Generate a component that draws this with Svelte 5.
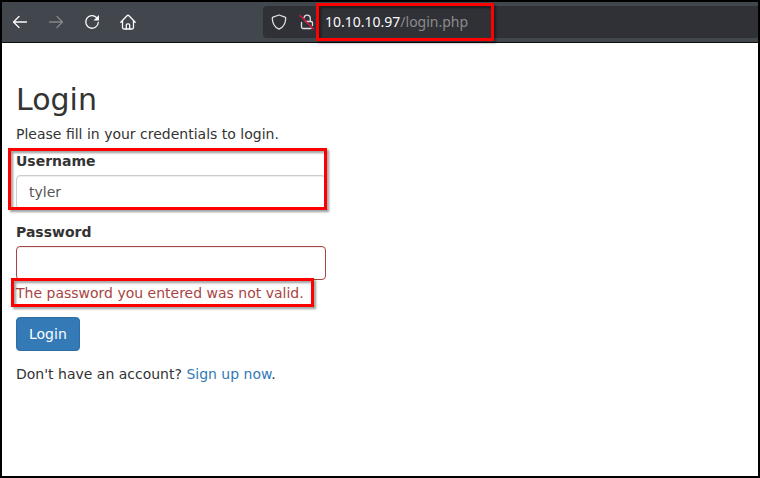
<script>
  let address = { host: '10.10.10.97', path: '/login.php' }
  let username = 'tyler'
  let password = ''
  let passwordError = 'The password you entered was not valid.'
</script>

<div class="window">
  <header class="toolbar">
    <button class="nav" aria-label="Back">
      <svg viewBox="0 0 16 16"><path d="M14.5 8H2M7 2.5 1.5 8 7 13.5" /></svg>
    </button>
    <button class="nav" aria-label="Forward" disabled>
      <svg viewBox="0 0 16 16"><path d="M1.5 8H14M9 2.5 14.5 8 9 13.5" /></svg>
    </button>
    <button class="nav" aria-label="Reload">
      <svg viewBox="0 0 16 16">
        <path d="M12.5 3.5A6.3 6.3 0 1 0 14.3 8.5" />
        <path class="solid" d="M15 1v5.5H9.5z" />
      </svg>
    </button>
    <button class="nav" aria-label="Home">
      <svg viewBox="0 0 16 16">
        <path d="M.8 8.2 7 1.7q1-1 2 0l6.2 6.5M2.5 7v6.5q0 1.500 1.500 1.500h8q1.500 0 1.500-1.500V7" />
        <path d="M6.300 15v-4q0-1.200 1.200-1.200h1q1.200 0 1.200 1.200v4" />
      </svg>
    </button>

    <div class="address">
      <svg viewBox="0 0 16 16">
        <path d="M8 1 14 3.2q.8.3.7 1.2Q14.5 12 8 15.2 1.5 12 1.3 4.400q-.1-.9.7-1.2z" />
      </svg>
      <svg viewBox="0 0 16 16">
        <path d="M5 3.800Q5.600 1.200 8 1.200q3.300 0 3.300 3.300V7M6.500 7.500H12q1.500 0 1.500 1.500v2.500M2.500 8.500v4.500q0 1.500 1.500 1.500h8" />
        <path class="strike" d="M1 1.500 14.500 15" />
      </svg>
      <div class="url marked">{address.host}<span>{address.path}</span></div>
    </div>
  </header>

  <main>
    <h1>Login</h1>
    <p>Please fill in your credentials to login.</p>
    <form on:submit|preventDefault>
      <div class="group marked">
        <label for="username">Username</label>
        <input id="username" type="text" bind:value={username}>
      </div>
      <div class="group has-error">
        <label for="password">Password</label>
        <input id="password" type="password" aria-describedby="password-error" bind:value={password}>
        <div class="help marked" id="password-error">{passwordError}</div>
      </div>
      <button class="submit" type="submit">Login</button>
      <p>Don't have an account? <a href="#register">Sign up now</a>.</p>
    </form>
  </main>
</div>

<style>
  :global(body) {
    margin: 0;
    background: #fff;
  }

  .window {
    box-sizing: border-box;
    min-height: 100vh;
    border: 2px solid #000;
    background: #fff;
    color: #333;
    font: 14px/20px "DejaVu Sans", sans-serif;
  }

  .toolbar {
    display: flex;
    align-items: center;
    height: 40px;
    border-bottom: 1px solid #0c0c0d;
    background: #42464d;
  }

  .nav {
    display: flex;
    justify-content: center;
    flex: none;
    width: 36px;
    padding: 0;
    border: 0;
    background: none;
    color: #fbfbfe;
  }

  .nav:disabled {
    color: #85878b;
  }

  svg {
    flex: none;
    width: 16px;
    height: 16px;
    fill: none;
    stroke: currentColor;
    stroke-width: 1.3;
    stroke-linecap: round;
    stroke-linejoin: round;
  }

  svg .solid {
    fill: currentColor;
    stroke: none;
  }

  svg .strike {
    stroke: #e2123f;
  }

  .address {
    display: flex;
    align-items: center;
    flex: 1;
    gap: 12px;
    height: 32px;
    margin-left: 117px;
    padding-left: 8px;
    border-radius: 4px 0 0 4px;
    background: #303136;
    color: #e0e0e2;
  }

  .url {
    margin-left: -2px;
    color: #fbfbfe;
    font: 14px/20px "Noto Sans", sans-serif;
  }

  .url span {
    color: #8b8b8f;
  }

  /* red frames around the parts worth noting */
  .marked {
    position: relative;
  }

  .marked::after {
    content: '';
    position: absolute;
    inset: -3px -1px -1px -8px;
    border: 3px solid #f00;
    filter: drop-shadow(2px 2px 1px rgba(0, 0, 0, 0.4));
    pointer-events: none;
  }

  .url.marked::after {
    inset: -9px -26px -9px -9px;
  }

  .help.marked::after {
    inset: -5px -10px -4px -5px;
  }

  main {
    max-width: 310px;
    padding: 40px 14px 14px;
  }

  h1 {
    margin: 0 0 8px;
    font-size: 30px;
    font-weight: 400;
    line-height: 33px;
  }

  p {
    margin: 0;
  }

  form {
    display: flex;
    flex-direction: column;
    align-items: flex-start;
    gap: 13px;
    margin-top: 7px;
  }

  .group {
    display: flex;
    flex-direction: column;
    align-items: flex-start;
    width: 100%;
  }

  .has-error {
    padding-bottom: 1px;
  }

  label {
    margin-bottom: 4px;
    font-weight: 700;
  }

  input {
    box-sizing: border-box;
    width: 100%;
    height: 34px;
    padding: 6px 12px;
    border: 1px solid #ccc;
    border-radius: 4px;
    background: #fff;
    box-shadow: inset 0 1px 1px rgba(0, 0, 0, 0.075);
    color: #555;
    font: inherit;
  }

  .has-error input {
    border-color: #a94442;
  }

  .help {
    margin-top: 3px;
    color: #a94442;
  }

  .submit {
    padding: 6px 12px;
    border: 1px solid #2e6da4;
    border-radius: 4px;
    background: #337ab7;
    color: #fff;
    font: inherit;
  }

  a {
    color: #337ab7;
    text-decoration: none;
  }
</style>
